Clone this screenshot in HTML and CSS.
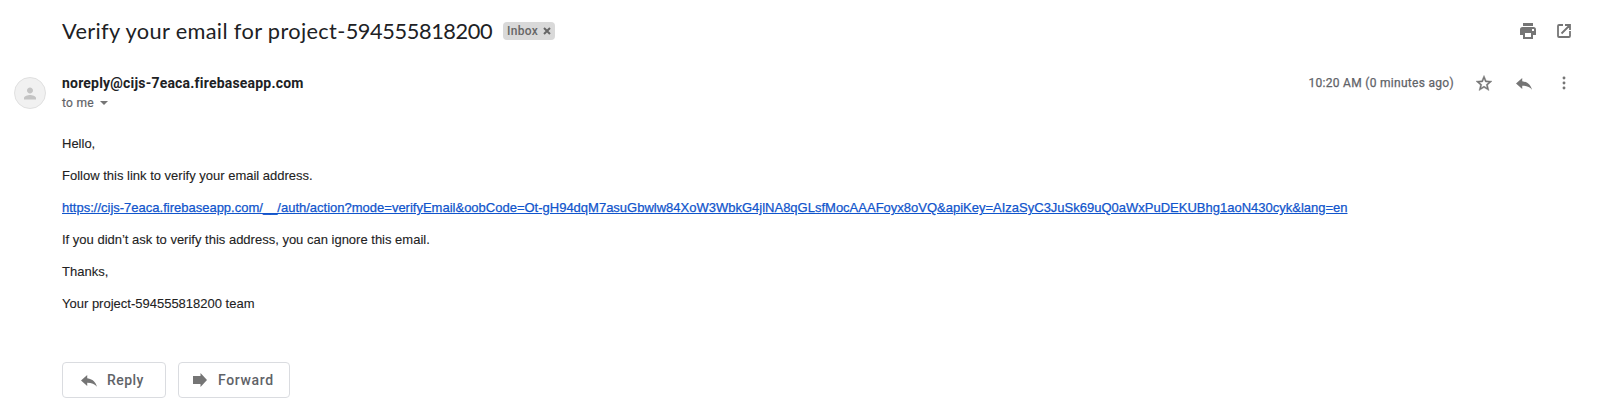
FILE: index.html
```html
<!DOCTYPE html>
<html lang="en">
<head>
<meta charset="utf-8">
<title>Verify your email</title>
<link rel="stylesheet" href="styles.css">
</head>
<body>
<main class="message">
  <header class="subject">
    <h1 class="title">Verify your email for project-<span class="digits">594555818200</span></h1>
    <div class="label"><span class="label-name">Inbox</span><svg class="label-close" viewBox="0 0 8 8"><path d="M1 1l6 6M7 1l-6 6"/></svg></div>
    <div class="tools">
      <svg class="print" viewBox="0 0 16 16"><path fill-rule="evenodd" d="M3 0h10v3H3zM2.500 4h11A2.500 2.500 0 0 1 16 6.500V12h-3v4H3v-4H0V6.500A2.500 2.500 0 0 1 2.500 4zM5 10v4h6v-4zM12 6v2h2V6z"/></svg>
      <svg class="open" viewBox="0 0 14 14"><path d="M6 1H2a1 1 0 0 0-1 1v10a1 1 0 0 0 1 1h10a1 1 0 0 0 1-1V7M8 1h5v5M4.500 9.500L13 1"/></svg>
    </div>
  </header>
  <section class="sender">
    <div class="avatar"><svg viewBox="4 4 16 16"><path d="M12 12c2.210 0 4-1.790 4-4s-1.790-4-4-4-4 1.790-4 4 1.790 4 4 4zm0 2c-2.670 0-8 1.340-8 4v2h16v-2c0-2.660-5.330-4-8-4z"/></svg></div>
    <div class="who">
      <div class="from">noreply@cijs-7eaca.firebaseapp.com</div>
      <div class="to"><span class="to-name">to me</span><svg viewBox="0 0 8 4"><path d="M0 0h8L4 4z"/></svg></div>
    </div>
    <div class="meta">
      <span class="time">10:20 AM (0 minutes ago)</span>
      <svg class="star" viewBox="2 2 20 19"><path d="M22 9.240l-7.190-.62L12 2 9.190 8.630 2 9.240l5.460 4.730L5.820 21 12 17.270 18.180 21l-1.630-7.030L22 9.240zM12 15.400l-3.760 2.270 1-4.280-3.320-2.880 4.380-.38L12 6.100l1.710 4.040 4.380.38-3.320 2.880 1 4.280L12 15.400z"/></svg>
      <svg class="reply-icon" viewBox="3 5 18 14" preserveAspectRatio="none"><path d="M10 9V5l-7 7 7 7v-4.100c5 0 8.500 1.600 11 5.100-1-5-4-10-11-11z"/></svg>
      <svg class="more" viewBox="0 0 4 14"><circle cx="2" cy="2" r="1.450"/><circle cx="2" cy="7" r="1.450"/><circle cx="2" cy="12" r="1.450"/></svg>
    </div>
  </section>
  <article class="body">
    <p class="hello">Hello,</p>
    <p class="follow">Follow this link to verify your email address.</p>
    <p class="link"><a href="#">https://cijs-7eaca.firebaseapp.com/__/auth/action?mode=verifyEmail&amp;oobCode=Ot-gH94dqM7asuGbwlw84XoW3WbkG4jlNA8qGLsfMocAAAFoyx8oVQ&amp;apiKey=AIzaSyC3JuSk69uQ0aWxPuDEKUBhg1aoN430cyk&amp;lang=en</a></p>
    <p class="ignore">If you didn’t ask to verify this address, you can ignore this email.</p>
    <p class="thanks">Thanks,</p>
    <p class="team">Your project-594555818200 team</p>
  </article>
  <footer class="actions">
    <button class="btn reply"><svg class="reply-icon" viewBox="3 5 18 14" preserveAspectRatio="none"><path d="M10 9V5l-7 7 7 7v-4.100c5 0 8.500 1.600 11 5.100-1-5-4-10-11-11z"/></svg><span>Reply</span></button>
    <button class="btn forward"><svg class="forward-icon" viewBox="0 0 14 14"><path d="M0 3h7.500V0L14 7l-6.500 7v-3H0z"/></svg><span>Forward</span></button>
  </footer>
</main>
</body>
</html>
```
FILE: styles.css
```css
* { box-sizing: border-box; }
body { margin: 0; background: #fff; color: #202124; font-family: Roboto, sans-serif; }
svg { display: block; flex: none; fill: #757575; overflow: visible; }
.message { width: 1597px; height: 416px; padding: 17px 25px 0 62px; }

.subject { display: flex; align-items: center; height: 28px; }
.title { flex: none; width: 431px; margin: 0; font: 400 21.750px/28px Lato, sans-serif; letter-spacing: .35px; white-space: nowrap; }
.digits { letter-spacing: -.4px; }
.label { display: flex; align-items: center; gap: 5px; width: 52px; height: 18px; margin-left: 10px; padding-left: 4px; border-radius: 4px; background: #d9d9d9; color: #666; font-size: 12px; font-weight: 500; letter-spacing: .3px; }
.label-close { width: 8px; height: 8px; fill: none; stroke: #666; stroke-width: 2; }
.tools { display: flex; align-items: center; gap: 21px; margin: 0 1px 0 auto; }
.print { width: 16px; height: 16px; }
.open { width: 14px; height: 14px; fill: none; stroke: #757575; stroke-width: 1.800; }

.sender { display: flex; align-items: flex-start; height: 78px; margin: 0 0 0 -48px; padding-top: 28px; }
.avatar { display: grid; place-items: center; width: 32px; height: 32px; margin: 4px 16px 0 0; border: 1px solid #e0e0e0; border-radius: 50%; background: #f1f1f1; }
.avatar svg { width: 12px; height: 13px; fill: #c4c4c4; }
.from { font-size: 14px; font-weight: 700; line-height: 20px; letter-spacing: .2px; white-space: nowrap; }
.to { display: flex; align-items: center; gap: 6px; color: #5f6368; font-size: 12px; line-height: 20px; letter-spacing: .3px; -webkit-text-stroke: .2px; }
.meta { display: flex; align-items: center; height: 20px; margin-left: auto; }
.time { color: #5f6368; font-size: 12px; letter-spacing: .3px; white-space: nowrap; -webkit-text-stroke: .25px; }
.to svg { width: 8px; height: 4px; }
.star { width: 16px; height: 16px; margin-left: 22px; stroke: #757575; stroke-width: .5; }
.reply-icon { width: 16px; height: 11px; }
.meta .reply-icon { margin-left: 24px; }
.more { width: 4px; height: 14px; margin: 0 6px 0 30px; }

.body { padding-top: 11px; color: #222; font: 13px/20px "Liberation Sans", Arial, sans-serif; -webkit-text-stroke: .1px; }
.body p { width: max-content; margin: 0 0 12px; white-space: nowrap; }
.body a { color: #15c; -webkit-text-stroke: .25px; }

.actions { display: flex; gap: 12px; padding-top: 36px; }
.btn { display: flex; align-items: center; height: 36px; padding: 0 0 0 18px; border: 1px solid #dadce0; border-radius: 4px; background: #fff; color: #5f6368; font: 500 14px/20px Roboto, sans-serif; letter-spacing: .45px; }
.reply { width: 104px; gap: 10px; }
.forward { width: 112px; gap: 11px; padding-left: 14px; letter-spacing: .65px; }
.forward-icon { width: 14px; height: 14px; }
```
